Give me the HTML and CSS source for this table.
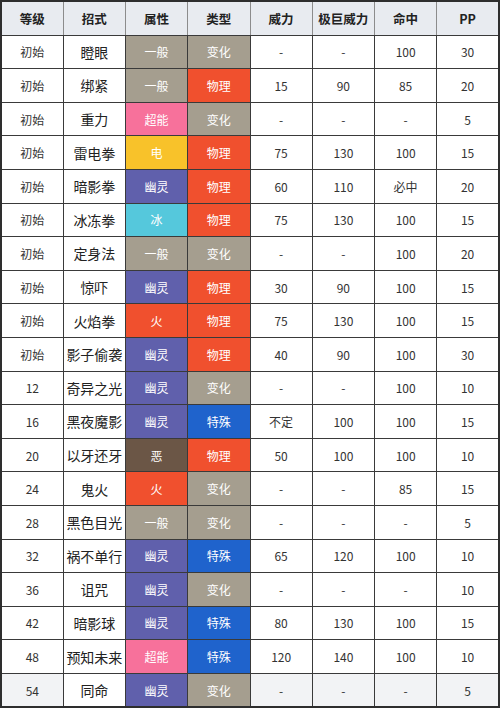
FILE: index.html
```html
<!DOCTYPE html>
<html lang="zh">
<head>
<meta charset="utf-8">
<link rel="stylesheet" href="styles.css">
</head>
<body>
<table class="moves">
<thead>
<tr><th>等级</th><th>招式</th><th>属性</th><th>类型</th><th>威力</th><th>极巨威力</th><th>命中</th><th>PP</th></tr>
</thead>
<tbody>
<tr><td>初始</td><td class="name">瞪眼</td><td class="t normal">一般</td><td class="t status">变化</td><td>-</td><td>-</td><td>100</td><td>30</td></tr>
<tr><td>初始</td><td class="name">绑紧</td><td class="t normal">一般</td><td class="t physical">物理</td><td>15</td><td>90</td><td>85</td><td>20</td></tr>
<tr><td>初始</td><td class="name">重力</td><td class="t psychic">超能</td><td class="t status">变化</td><td>-</td><td>-</td><td>-</td><td>5</td></tr>
<tr><td>初始</td><td class="name">雷电拳</td><td class="t electric">电</td><td class="t physical">物理</td><td>75</td><td>130</td><td>100</td><td>15</td></tr>
<tr><td>初始</td><td class="name">暗影拳</td><td class="t ghost">幽灵</td><td class="t physical">物理</td><td>60</td><td>110</td><td>必中</td><td>20</td></tr>
<tr><td>初始</td><td class="name">冰冻拳</td><td class="t ice">冰</td><td class="t physical">物理</td><td>75</td><td>130</td><td>100</td><td>15</td></tr>
<tr><td>初始</td><td class="name">定身法</td><td class="t normal">一般</td><td class="t status">变化</td><td>-</td><td>-</td><td>100</td><td>20</td></tr>
<tr><td>初始</td><td class="name">惊吓</td><td class="t ghost">幽灵</td><td class="t physical">物理</td><td>30</td><td>90</td><td>100</td><td>15</td></tr>
<tr><td>初始</td><td class="name">火焰拳</td><td class="t fire">火</td><td class="t physical">物理</td><td>75</td><td>130</td><td>100</td><td>15</td></tr>
<tr><td>初始</td><td class="name">影子偷袭</td><td class="t ghost">幽灵</td><td class="t physical">物理</td><td>40</td><td>90</td><td>100</td><td>30</td></tr>
<tr><td>12</td><td class="name">奇异之光</td><td class="t ghost">幽灵</td><td class="t status">变化</td><td>-</td><td>-</td><td>100</td><td>10</td></tr>
<tr><td>16</td><td class="name">黑夜魔影</td><td class="t ghost">幽灵</td><td class="t special">特殊</td><td>不定</td><td>100</td><td>100</td><td>15</td></tr>
<tr><td>20</td><td class="name">以牙还牙</td><td class="t dark">恶</td><td class="t physical">物理</td><td>50</td><td>100</td><td>100</td><td>10</td></tr>
<tr><td>24</td><td class="name">鬼火</td><td class="t fire">火</td><td class="t status">变化</td><td>-</td><td>-</td><td>85</td><td>15</td></tr>
<tr><td>28</td><td class="name">黑色目光</td><td class="t normal">一般</td><td class="t status">变化</td><td>-</td><td>-</td><td>-</td><td>5</td></tr>
<tr><td>32</td><td class="name">祸不单行</td><td class="t ghost">幽灵</td><td class="t special">特殊</td><td>65</td><td>120</td><td>100</td><td>10</td></tr>
<tr><td>36</td><td class="name">诅咒</td><td class="t ghost">幽灵</td><td class="t status">变化</td><td>-</td><td>-</td><td>-</td><td>10</td></tr>
<tr><td>42</td><td class="name">暗影球</td><td class="t ghost">幽灵</td><td class="t special">特殊</td><td>80</td><td>130</td><td>100</td><td>15</td></tr>
<tr><td>48</td><td class="name">预知未来</td><td class="t psychic">超能</td><td class="t special">特殊</td><td>120</td><td>140</td><td>100</td><td>10</td></tr>
<tr class="hl"><td>54</td><td class="name">同命</td><td class="t ghost">幽灵</td><td class="t status">变化</td><td>-</td><td>-</td><td>-</td><td>5</td></tr>
</tbody>
</table>
</body>
</html>
```
FILE: styles.css
```css
html, body {
  margin: 0;
  padding: 0;
  background: #fff;
}
.moves {
  width: 500px;
  table-layout: fixed;
  border-collapse: collapse;
  font-family: "Noto Sans CJK SC", "Noto Sans", sans-serif;
  font-size: 12px;
  color: #333;
  text-align: center;
  border: 2px solid #2e2e2e;
}
.moves th, .moves td {
  border: 1px solid #3a3a3a;
  padding: 0;
  height: 32.6px;
  vertical-align: middle;
}
.moves th {
  background: #e8ebf0;
  font-weight: bold;
  font-size: 12.5px;
  color: #222;
  border-left-color: #8c8c8c;
  border-right-color: #8c8c8c;
}
.moves td.name {
  font-size: 14px;
  color: #222;
}
.moves td.t {
  color: #fff;
  font-size: 12px;
}
.moves tr.hl td {
  background: #f2f3f5;
}
.moves tr.hl td.name {
  background: #fff;
}
.moves tr.hl td.t.ghost { background: #6060ac; }
.moves tr.hl td.t.status { background: #a59e8f; }
.normal { background: #a59e8f; }
.status { background: #a59e8f; }
.physical { background: #f0502e; }
.special { background: #1f63cc; }
.psychic { background: #f7719b; }
.electric { background: #f8c22a; }
.ghost { background: #6060ac; }
.ice { background: #55c8dc; }
.fire { background: #f0502e; }
.dark { background: #6b5646; }
```
